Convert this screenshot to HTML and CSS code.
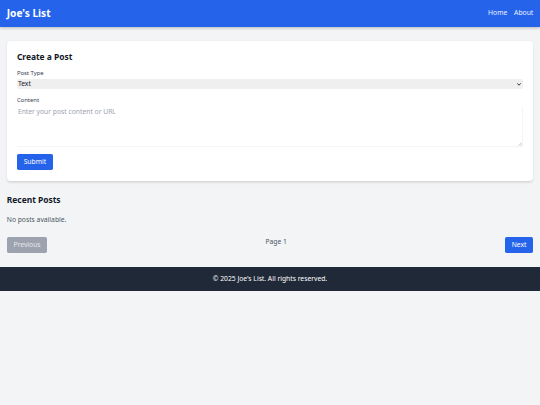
FILE: index.html
```html
<!DOCTYPE html>
<html lang="en">
<head>
<meta charset="utf-8">
<title>Joe's List</title>
<link rel="stylesheet" href="styles.css">
</head>
<body>
<header class="site-header">
  <div class="header-inner">
    <a class="brand" href="#">Joe's List</a>
    <nav class="nav">
      <a href="#">Home</a>
      <a href="#">About</a>
    </nav>
  </div>
</header>
<main class="main">
  <section class="card">
    <h2 class="card-title">Create a Post</h2>
    <form class="form">
      <div class="field">
        <label class="label" for="type">Post Type</label>
        <div class="select-wrap">
          <select class="select" id="type"><option>Text</option></select>
          <svg class="select-arrow" viewBox="0 0 8 6" width="4" height="3" aria-hidden="true"><path d="M1 1.2 L4 4.4 L7 1.2" fill="none" stroke="#222" stroke-width="1.8" stroke-linecap="round" stroke-linejoin="round"/></svg>
        </div>
      </div>
      <div class="field">
        <label class="label" for="content">Content</label>
        <div class="textarea-wrap">
          <textarea class="textarea" id="content" rows="4" placeholder="Enter your post content or URL"></textarea>
          <svg class="resize-handle" viewBox="0 0 6 6" width="4" height="4" aria-hidden="true"><path d="M5.5 1 L1 5.5 M5.5 3.5 L3.5 5.5" fill="none" stroke="#9a9a9a" stroke-width="0.8"/></svg>
        </div>
      </div>
      <button class="btn btn-primary" type="button">Submit</button>
    </form>
  </section>
  <section class="recent">
    <h2 class="section-title">Recent Posts</h2>
    <p class="empty">No posts available.</p>
    <div class="pagination">
      <button class="btn btn-disabled" type="button">Previous</button>
      <span class="page">Page 1</span>
      <button class="btn btn-primary" type="button">Next</button>
    </div>
  </section>
</main>
<footer class="footer">© 2025 Joe's List. All rights reserved.</footer>
</body>
</html>
```
FILE: styles.css
```css
* { box-sizing: border-box; }
html, body { margin: 0; padding: 0; }
body {
  background: #f3f4f6;
  font-family: "Noto Sans", "Open Sans", sans-serif;
  font-size: 6.75px;
  line-height: 10.125px;
  color: #111827;
  min-height: 405px;
}
a { color: inherit; text-decoration: none; }

.site-header {
  background: #2563eb;
  color: #ffffff;
  box-shadow: 0 1.7px 2.5px rgba(0,0,0,0.12), 0 0.8px 1.7px rgba(0,0,0,0.08);
  position: relative;
}
.header-inner {
  display: flex;
  justify-content: space-between;
  align-items: center;
  padding: 6.75px 6.75px;
}
.brand {
  font-size: 10.125px;
  line-height: 13.5px;
  font-weight: 700;
}
.nav { display: flex; gap: 6.75px; color: #eef2ff; }

.main { padding: 13.5px 6.75px; }

.card {
  background: #ffffff;
  border-radius: 3.4px;
  padding: 10.125px;
  box-shadow: 0 1.7px 2.5px rgba(0,0,0,0.08), 0 0.8px 1.7px rgba(0,0,0,0.06);
  margin-bottom: 13.5px;
}
.card-title, .section-title {
  margin: 0 0 6.75px;
  font-size: 8.4375px;
  line-height: 11.8125px;
  font-weight: 700;
}
.section-title { margin-bottom: 9.5px; }
.form { margin: 0; }
.field { margin-bottom: 6.75px; }
.label {
  display: block;
  font-size: 5.906px;
  line-height: 8.4375px;
  color: #374151;
  margin-bottom: 1.69px;
}
.select-wrap, .textarea-wrap { position: relative; }
.select {
  display: block;
  width: 100%;
  height: 10.125px;
  font-family: inherit;
  font-size: 6.75px;
  line-height: 10.125px;
  padding: 0 0 0 1px;
  margin: 0;
  border: none;
  border-radius: 2px;
  background-color: #efefef;
  color: #111827;
  appearance: none;
  -webkit-appearance: none;
}
.select-arrow {
  position: absolute;
  right: 2.5px;
  top: 3.6px;
  pointer-events: none;
}
.textarea {
  display: block;
  width: 100%;
  height: 40.5px;
  font-family: inherit;
  font-size: 6.75px;
  line-height: 10.125px;
  padding: 0;
  margin: 0;
  border: 1px solid #f4f5f6;
  border-left-color: #ffffff;
  border-top-color: #ffffff;
  border-radius: 0;
  color: #111827;
  background: #ffffff;
  resize: none;
}
.textarea::placeholder { color: #9ca3af; }
.resize-handle {
  position: absolute;
  right: 1px;
  bottom: 1px;
  pointer-events: none;
}

.btn {
  font-family: inherit;
  font-size: 6.75px;
  line-height: 10.125px;
  padding: 3.375px 6.75px;
  border: none;
  border-radius: 1.7px;
  margin: 0;
}
.btn-primary { background: #2563eb; color: #ffffff; }
.btn-disabled { background: #9ca3af; color: #e5e7eb; }

.empty { margin: 0 0 11px; color: #4b5563; }
.pagination {
  display: flex;
  justify-content: space-between;
  align-items: flex-start;
}
.page { color: #4b5563; padding-top: 0.5px; }

.footer {
  background: #1f2937;
  color: #ffffff;
  text-align: center;
  padding: 6.75px;
}
```
